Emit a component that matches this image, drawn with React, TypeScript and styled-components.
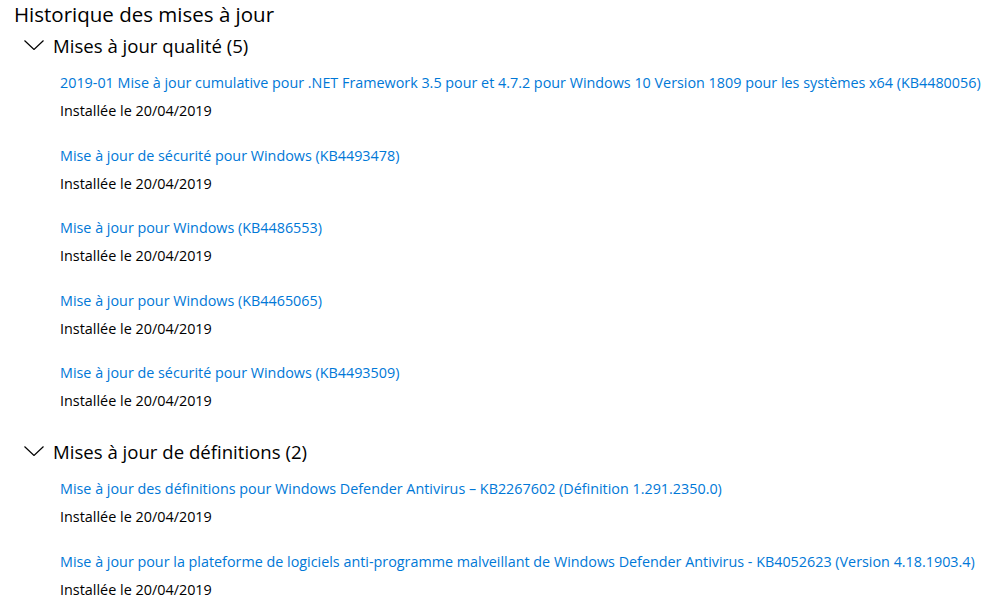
import React from "react";
import styled, { createGlobalStyle } from "styled-components";

const Global = createGlobalStyle`
  html, body { margin: 0; padding: 0; background: #fff; }
  body { font-family: "Open Sans", "Noto Sans", sans-serif; color: #000; }
`;

const Page = styled.div`
  width: 1000px;
  height: 614px;
  overflow: hidden;
  padding: 0 0 0 14px;
  box-sizing: border-box;
`;

const Title = styled.h1`
  margin: 0;
  font-weight: 400;
  font-size: 20.5px;
  line-height: 28px;
`;

const Section = styled.section`
  display: flex;
  flex-direction: column;
  & + & {
    margin-top: 9.5px;
  }
`;

const SectionHeader = styled.div`
  display: flex;
  align-items: center;
  gap: 9px;
  padding-left: 10px;
  height: 34px;
  font-size: 18.6px;
`;

const Chevron = styled.svg`
  width: 20px;
  height: 10px;
  flex: none;
`;

const List = styled.div`
  display: flex;
  flex-direction: column;
  padding-left: 46px;
`;

const Entry = styled.div`
  display: flex;
  flex-direction: column;
  padding-top: 7px;
  padding-bottom: 9.5px;
`;

const Link = styled.a`
  color: #0078d7;
  font-size: 14.35px;
  line-height: 28px;
  text-decoration: none;
  white-space: nowrap;
`;

const Status = styled.div`
  font-size: 14.4px;
  line-height: 28px;
`;

const sections = [
  {
    title: "Mises à jour qualité (5)",
    items: [
      "2019-01 Mise à jour cumulative pour .NET Framework 3.5 pour et 4.7.2 pour Windows 10 Version 1809 pour les systèmes x64 (KB4480056)",
      "Mise à jour de sécurité pour Windows (KB4493478)",
      "Mise à jour pour Windows (KB4486553)",
      "Mise à jour pour Windows (KB4465065)",
      "Mise à jour de sécurité pour Windows (KB4493509)",
    ],
  },
  {
    title: "Mises à jour de définitions (2)",
    items: [
      "Mise à jour des définitions pour Windows Defender Antivirus – KB2267602 (Définition 1.291.2350.0)",
      "Mise à jour pour la plateforme de logiciels anti-programme malveillant de Windows Defender Antivirus - KB4052623 (Version 4.18.1903.4)",
    ],
  },
];

export default function App() {
  return (
    <>
      <Global />
      <Page>
        <Title>Historique des mises à jour</Title>
        {sections.map((s) => (
          <Section key={s.title}>
            <SectionHeader>
              <Chevron viewBox="0 0 20 10">
                <path d="M0.5 0.5 L10 9.5 L19.5 0.5" fill="none" stroke="#000" strokeWidth="1.2" />
              </Chevron>
              <span>{s.title}</span>
            </SectionHeader>
            <List>
              {s.items.map((it) => (
                <Entry key={it}>
                  <Link href="#">{it}</Link>
                  <Status>Installée le 20/04/2019</Status>
                </Entry>
              ))}
            </List>
          </Section>
        ))}
      </Page>
    </>
  );
}
